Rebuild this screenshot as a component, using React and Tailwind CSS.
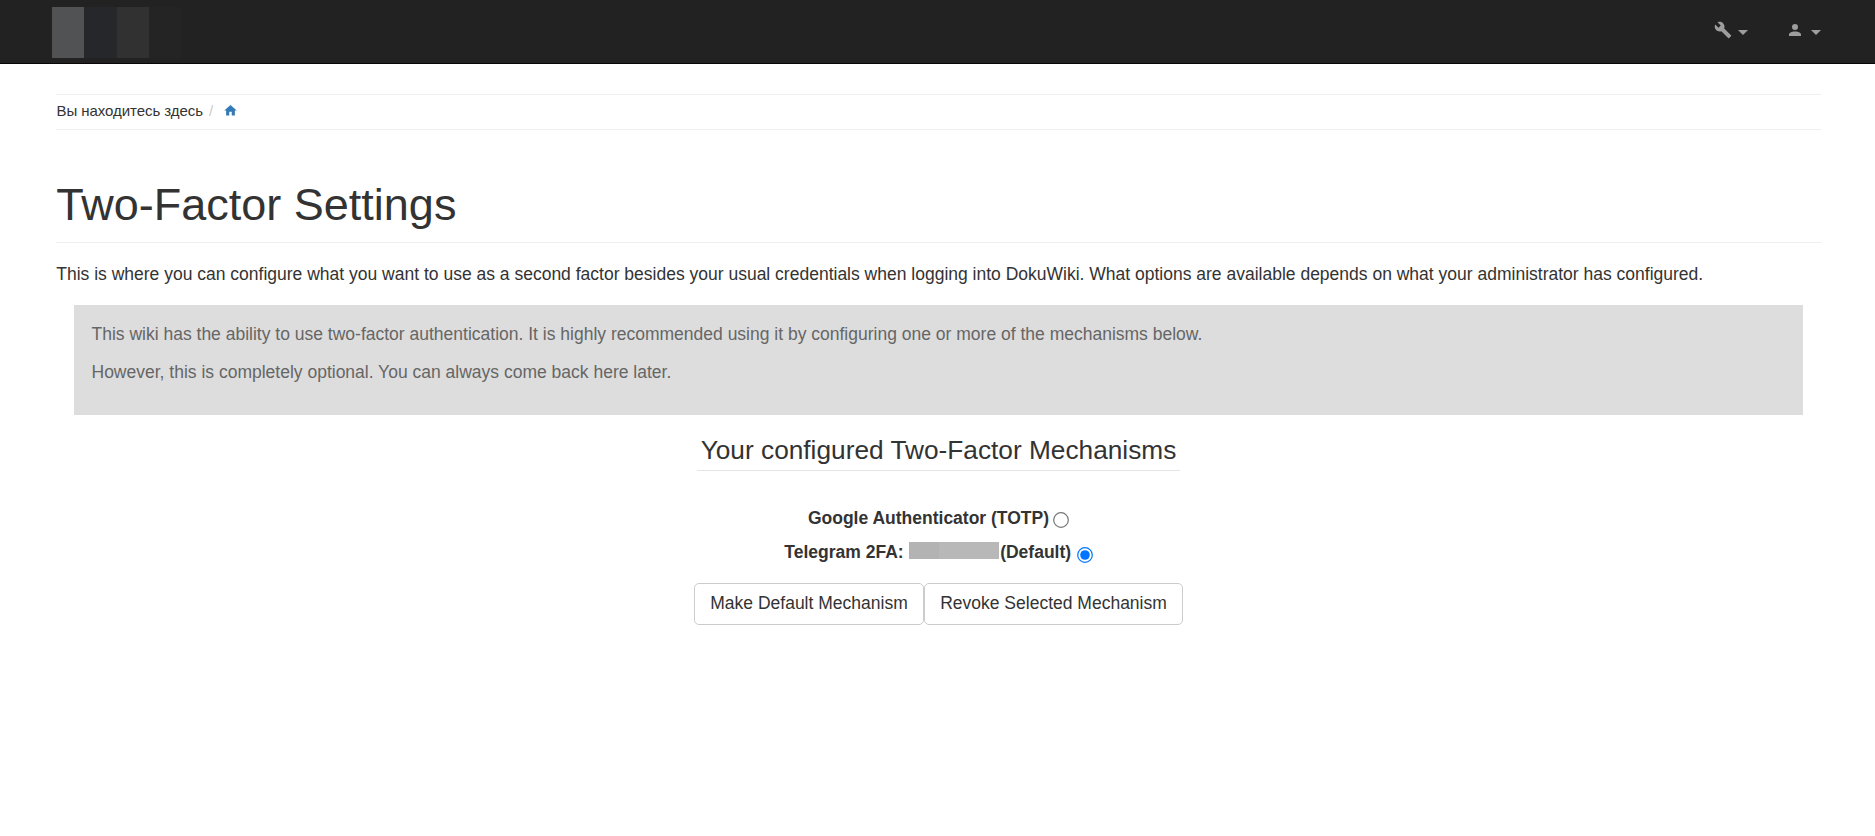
const WRENCH =
  "M22.7,19L13.6,9.9C14.5,7.6 14,4.9 12.1,3C10.1,1 7.1,.6 4.7,1.7L9,6L6,9L1.6,4.7C.4,7.1 .9,10.1 2.9,12.1C4.8,14 7.5,14.5 9.8,13.6L18.9,22.7C19.3,23.1 19.9,23.1 20.3,22.7L22.6,20.4C23.1,20 23.1,19.3 22.7,19Z";
const ACCOUNT =
  "M12,4A4,4 0 0,1 16,8A4,4 0 0,1 12,12A4,4 0 0,1 8,8A4,4 0 0,1 12,4M12,14C16.42,14 20,15.79 20,18V20H4V18C4,15.79 7.58,14 12,14Z";
const HOME = "M10,20V14H14V20H19V12H22L12,3L2,12H5V20H10Z";

function Icon({ path, className }) {
  return (
    <svg viewBox="0 0 24 24" fill="currentColor" className={className}>
      <path d={path} />
    </svg>
  );
}

function Caret() {
  return (
    <svg viewBox="0 0 10 5" fill="currentColor" className="mt-[9px] h-[5px] w-[10px]">
      <path d="M0 0H10L5 5Z" />
    </svg>
  );
}

function Navbar() {
  return (
    <nav className="flex h-16 items-start justify-between border-b border-[#080808] bg-[#222] pl-[52px] pr-[54px] text-[#9d9d9d]">
      <div className="mt-[7px] flex h-[51px]">
        <div className="w-8 bg-[#515254]" />
        <div className="w-[33px] bg-[#25272b]" />
        <div className="w-8 bg-[#313131]" />
        <div className="w-8 bg-[#242424]" />
      </div>
      <div className="mt-[21px] flex gap-[38px]">
        <button className="flex items-start gap-[6px]" aria-label="Tools">
          <Icon path={WRENCH} className="size-[18px]" />
          <Caret />
        </button>
        <button className="flex items-start gap-[7px]" aria-label="Account">
          <Icon path={ACCOUNT} className="size-[18px]" />
          <Caret />
        </button>
      </div>
    </nav>
  );
}

function Radio({ checked }) {
  return (
    <svg viewBox="0 0 16 16" className="size-4">
      <circle cx="8" cy="8" r="7.3" fill="#fff" stroke={checked ? "#0075ff" : "#767676"} strokeWidth="1.2" />
      {checked && <circle cx="8" cy="8" r="4.8" fill="#0075ff" />}
    </svg>
  );
}

export default function App() {
  return (
    <div className="min-h-[836px] bg-white font-['Liberation_Sans',Arial,sans-serif] text-[17.5px] leading-[25px] text-[#333]">
      <Navbar />
      <main className="pl-[56px] pr-[54px] pt-[30px]">
        <div className="flex h-9 items-center border-y border-[#eee] pb-[3px] pl-[0.5px] text-[15px]">
          <span className="tracking-[-0.06px]">Вы находитесь здесь</span>
          <span className="ml-[6px] text-[#ccc]">/</span>
          <Icon path={HOME} className="ml-[10px] size-[15px] text-[#337ab7]" />
        </div>
        <h1 className="mt-[49px] h-[64px] border-b border-[#eee] pl-[0.25px] pt-px text-[45px] leading-[50px]">
          Two-Factor Settings
        </h1>
        <p className="mt-[19px] pl-[0.25px]">
          This is where you can configure what you want to use as a second factor besides your usual credentials when
          logging into DokuWiki. What options are available depends on what your administrator has configured.
        </p>
        <div className="mx-[18px] mt-[18px] h-[110px] bg-[#ddd] px-[17.5px] pt-[17px] text-[#666]">
          <p>
            This wiki has the ability to use two-factor authentication. It is highly recommended using it by configuring
            one or more of the mechanisms below.
          </p>
          <p className="mt-[13px]">However, this is completely optional. You can always come back here later.</p>
        </div>
        <form className="flex flex-col items-center">
          <h2 className="mt-[17px] h-[39px] border-b border-[#e5e5e5] px-1 text-[26.25px] leading-[37px]">
            Your configured Two-Factor Mechanisms
          </h2>
          <label className="mt-[35px] flex items-center gap-1 font-bold">
            Google Authenticator (TOTP)
            <span className="mt-[3px]">
              <Radio />
            </span>
          </label>
          <label className="mt-[9px] flex items-center font-bold">
            Telegram 2FA:
            <span className="mb-1 ml-[5px] mr-[1.5px] flex h-[17px]">
              <span className="w-[30px] bg-[#b3b3b3]" />
              <span className="w-[60px] bg-[#b8b8b8]" />
            </span>
            (Default)
            <span className="ml-[5.5px] mt-[4px]">
              <Radio checked />
            </span>
          </label>
          <div className="mt-[18px] flex">
            <button
              type="button"
              className="h-[42px] w-[230px] rounded-[5px] border border-[#ccc] pb-[2px] whitespace-nowrap"
            >
              Make Default Mechanism
            </button>
            <button
              type="button"
              className="h-[42px] w-[259px] rounded-[5px] border border-[#ccc] pb-[2px] whitespace-nowrap"
            >
              Revoke Selected Mechanism
            </button>
          </div>
        </form>
      </main>
    </div>
  );
}
